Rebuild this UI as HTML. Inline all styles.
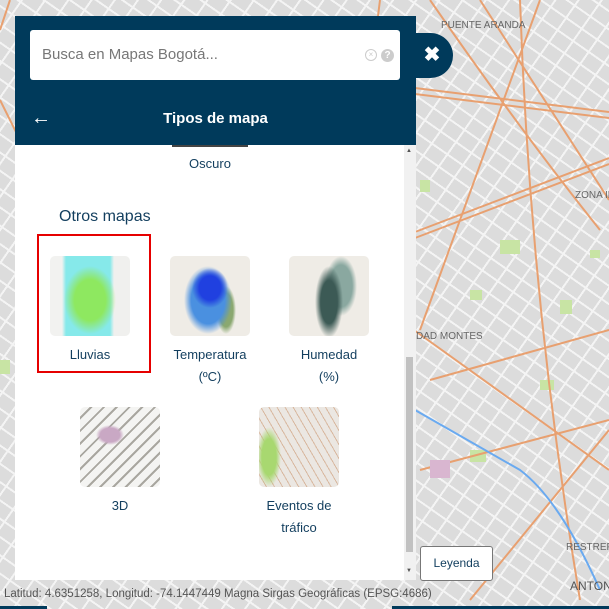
<!DOCTYPE html>
<html><head><meta charset="utf-8"><style>
*{margin:0;padding:0;box-sizing:border-box}
body{width:609px;height:609px;overflow:hidden;position:relative;background:#e0e0e0;font-family:"Liberation Sans",sans-serif}
.abs{position:absolute}
#grid{left:0;top:0;width:609px;height:609px;background:repeating-linear-gradient(35deg,transparent 0 13px,#f4f4f4 13px 15px),repeating-linear-gradient(125deg,transparent 0 17px,#f4f4f4 17px 19px),#dcdcdc}
#panel{left:15px;top:16px;width:401px;height:564px;background:#fff}
#hdr{left:15px;top:16px;width:401px;height:129px;background:#003a5b}
#search{left:30px;top:30px;width:370px;height:50px;background:#fff;border-radius:3px;color:#777;font-size:15px;padding:16px 12px}
.t{color:#123e5e;font-size:13px;text-align:center;line-height:22px}
.th{border-radius:5px;width:80px;height:80px}
</style></head><body>
<div class="abs" id="grid"></div>
<svg class="abs" style="left:0;top:0" width="609" height="609">
<g fill="#c8e4a4"><rect x="470" y="290" width="12" height="10"/><rect x="540" y="380" width="14" height="10"/><rect x="590" y="250" width="10" height="8"/><rect x="470" y="450" width="16" height="12"/><rect x="500" y="240" width="20" height="14"/><rect x="420" y="180" width="10" height="12"/><rect x="560" y="300" width="12" height="14"/><rect x="0" y="360" width="10" height="14"/></g>
<g stroke="#e8a070" stroke-width="2" fill="none">
<path d="M415 88 L609 112 M415 94 L609 118 M415 232 L609 158 M415 238 L609 164 M430 0 Q520 130 600 230 M470 600 L609 430 M400 320 L609 470 M520 0 Q530 300 580 600 M540 0 L420 330 M420 470 L609 420 M480 0 L609 200 M0 100 L20 140 M380 0 L375 40 M10 0 L0 30 M430 380 L609 330"/>
</g>
<path d="M415 410 L520 470 Q560 500 600 590" stroke="#6aaaf0" stroke-width="2" fill="none"/>
<rect x="430" y="460" width="20" height="18" fill="#d9b6d0"/>
<g font-size="10" fill="#666" font-family="Liberation Sans">
<text x="441" y="28">PUENTE ARANDA</text>
<text x="575" y="198">ZONA IN</text>
<text x="416" y="339">DAD MONTES</text>
<text x="566" y="550">RESTREPO</text></g>
<text x="570" y="590" font-size="12" fill="#555" font-family="Liberation Sans">ANTON</text>
</svg>
<div class="abs" id="panel"></div>
<div class="abs" id="hdr"></div>
<div class="abs" style="left:405px;top:33px;width:48px;height:45px;background:#003a5b;border-radius:0 24px 24px 0;color:#fff;font-size:20px;font-weight:bold;text-align:center;line-height:45px;padding-left:6px">✖</div>
<div class="abs" id="search">Busca en Mapas Bogotá...</div>
<div class="abs" style="left:365px;top:49px;width:12px;height:12px;border:1.5px solid #ccc;border-radius:50%;color:#ccc;font-size:8px;text-align:center;line-height:9px">×</div>
<div class="abs" style="left:381px;top:49px;width:13px;height:13px;background:#ccc;border-radius:50%;color:#fff;font-size:10px;font-weight:bold;text-align:center;line-height:13px">?</div>
<div class="abs" style="left:31px;top:107px;color:#fff;font-size:20px;font-weight:bold">←</div>
<div class="abs" style="left:15px;top:110px;width:401px;text-align:center;color:#fff;font-size:15px;font-weight:bold">Tipos de mapa</div>
<div class="abs" style="left:172px;top:145px;width:76px;height:2px;background:#444"></div>
<div class="abs t" style="left:160px;top:153px;width:100px">Oscuro</div>
<div class="abs" style="left:59px;top:208px;color:#123e5e;font-size:16px">Otros mapas</div>
<div class="abs" style="left:37px;top:234px;width:114px;height:139px;border:2px solid #e60000"></div>
<div class="abs th" style="left:50px;top:256px;background:radial-gradient(ellipse 26px 34px at 40px 44px,#8ee860 60%,transparent 100%),linear-gradient(90deg,#f2f2f0 15%,#86e9ea 20%,#86e9ea 75%,#f0f0ee 80%)"></div>
<div class="abs th" style="left:170px;top:256px;background:radial-gradient(ellipse 18px 20px at 40px 32px,#2040e0 60%,transparent 100%),radial-gradient(ellipse 24px 34px at 38px 44px,#4a90e0 70%,transparent 100%),radial-gradient(ellipse 10px 24px at 56px 54px,#8aa870 70%,transparent 100%),#efece6"></div>
<div class="abs th" style="left:289px;top:256px;background:radial-gradient(ellipse 14px 36px at 40px 46px,#3c5a55 60%,transparent 100%),radial-gradient(ellipse 16px 30px at 52px 30px,#8aa8a0 70%,transparent 100%),#efece6"></div>
<div class="abs t" style="left:40px;top:344px;width:100px">Lluvias</div>
<div class="abs t" style="left:160px;top:344px;width:100px">Temperatura<br>(ºC)</div>
<div class="abs t" style="left:279px;top:344px;width:100px">Humedad<br>(%)</div>
<div class="abs th" style="left:80px;top:407px;background:radial-gradient(ellipse 14px 10px at 30px 28px,#c9a8c4 70%,transparent 100%),repeating-linear-gradient(135deg,#f4f4f2 0 7px,#a9a7a0 7px 9px),#ddd"></div>
<div class="abs th" style="left:259px;top:407px;background:radial-gradient(ellipse 12px 30px at 10px 50px,#a8d870 60%,transparent 100%),repeating-linear-gradient(60deg,#ebe7e2 0 6px,#d8b8a0 6px 7px),#eee"></div>
<div class="abs t" style="left:70px;top:495px;width:100px">3D</div>
<div class="abs t" style="left:249px;top:495px;width:100px">Eventos de<br>tráfico</div>
<div class="abs" style="left:404px;top:145px;width:12px;height:435px;background:#f1f1f1"></div>
<div class="abs" style="left:406px;top:357px;width:7px;height:195px;background:#c1c1c1"></div>
<div class="abs" style="left:406px;top:148px;font-size:6px;color:#555">▲</div>
<div class="abs" style="left:406px;top:568px;font-size:6px;color:#555">▼</div>
<div class="abs" style="left:420px;top:546px;width:73px;height:35px;background:#fff;border:1px solid #777;border-radius:3px;font-size:12px;color:#123e5e;text-align:center;line-height:33px">Leyenda</div>
<div class="abs" style="left:4px;top:588px;font-size:11.5px;color:#555">Latitud: 4.6351258, Longitud: -74.1447449 Magna Sirgas Geográficas (EPSG:4686)</div>
<div class="abs" style="left:0;top:606px;width:47px;height:3px;background:#003a5b"></div>
<div class="abs" style="left:392px;top:606px;width:217px;height:3px;background:#003a5b"></div>
</body></html>
